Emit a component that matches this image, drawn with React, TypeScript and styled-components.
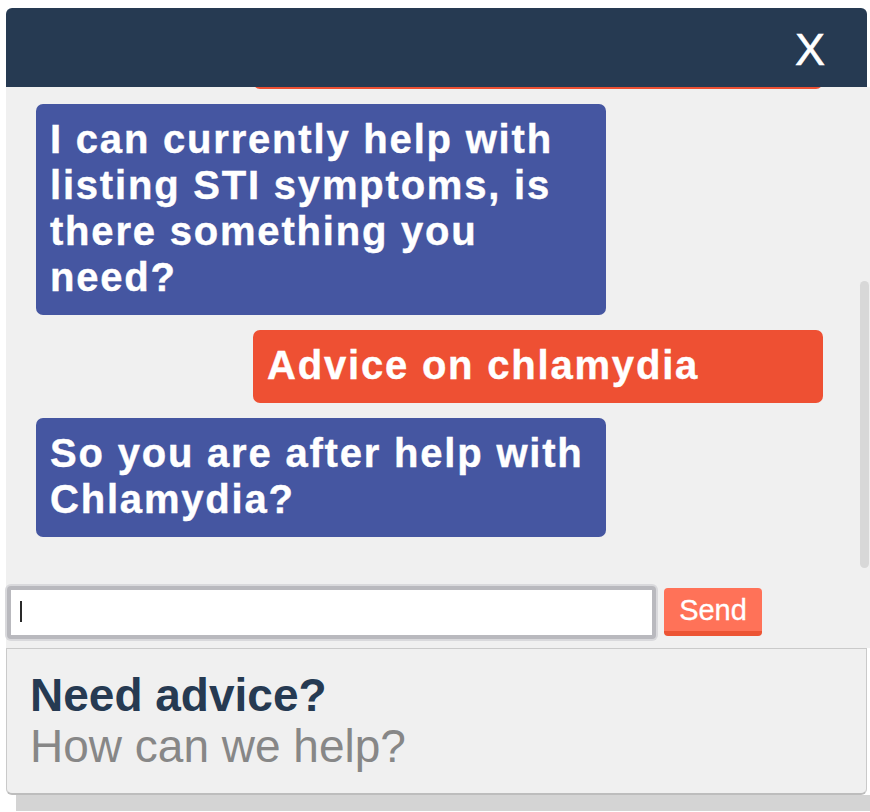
import React, { useLayoutEffect, useRef, useState } from "react";
import styled, { createGlobalStyle } from "styled-components";

const Global = createGlobalStyle`
  *, *::before, *::after { box-sizing: border-box; }
  html, body { margin: 0; padding: 0; background: #ffffff; }
  body { font-family: "Liberation Sans", Arial, Helvetica, sans-serif; }
`;

const Widget = styled.div`
  width: 864px;
  margin: 8px 0 0 6px;
  display: flex;
  flex-direction: column;
`;

const Header = styled.header`
  height: 79px;
  margin-right: 3px;
  background: #263a52;
  border-radius: 6px 6px 0 0;
  display: flex;
  align-items: center;
  justify-content: flex-end;
  padding-right: 42px;
`;

const CloseButton = styled.button`
  background: none;
  border: none;
  padding: 0;
  margin-top: 4px;
  color: #ffffff;
  font-family: "Liberation Sans", Arial, sans-serif;
  font-size: 45px;
  line-height: 1;
  -webkit-text-stroke: 0.6px #ffffff;
  cursor: pointer;
`;

const Body = styled.div`
  background: #f0f0f0;
  display: flex;
  flex-direction: column;
`;

const ScrollArea = styled.div`
  position: relative;
`;

const Messages = styled.div`
  height: 481px;
  overflow-y: auto;
  scrollbar-width: none;
  display: flex;
  flex-direction: column;
  gap: 15px;
  padding: 28px 47px 31px 30px;

  &::-webkit-scrollbar { display: none; }
`;

const Thumb = styled.div`
  position: absolute;
  right: 1px;
  width: 9px;
  background: #d8d8d8;
  border-radius: 5px;
`;

const Bubble = styled.div<{ $from: "bot" | "user" }>`
  flex: none;
  width: 570px;
  align-self: ${(p) => (p.$from === "bot" ? "flex-start" : "flex-end")};
  background: ${(p) => (p.$from === "bot" ? "#4556a1" : "#ee5033")};
  color: #ffffff;
  border-radius: 7px;
  padding: 12px 12px 15px 14px;
  font-family: "Liberation Sans", Arial, sans-serif;
  font-weight: 700;
  font-size: 40px;
  line-height: 46px;
  letter-spacing: 1.8px;
  -webkit-text-stroke: 0.4px #ffffff;
`;

const Composer = styled.div`
  display: flex;
  align-items: flex-start;
  gap: 8px;
  padding: 18px 0 9px 1px;
`;

const InputWrap = styled.div`
  position: relative;
  width: 649px;
  height: 53px;
`;

const TextInput = styled.input`
  width: 100%;
  height: 100%;
  border: 4px solid #b9b9be;
  border-radius: 4px;
  box-shadow: 0 0 0 2px #d9d9dc;
  background: #ffffff;
  outline: none;
  padding: 0 10px;
  font-family: "Liberation Sans", Arial, sans-serif;
  font-size: 22px;
`;

const Caret = styled.span`
  position: absolute;
  left: 13px;
  top: 15px;
  width: 2px;
  height: 21px;
  background: #2a2a2a;
`;

const SendButton = styled.button`
  margin-top: 2px;
  height: 48px;
  width: 98px;
  background: #ff7258;
  border: none;
  border-bottom: 5px solid #ec5434;
  border-radius: 4px;
  color: #ffffff;
  font-family: "Liberation Sans", Arial, sans-serif;
  font-size: 29px;
  line-height: 1;
  padding: 2px 0 0 0;
  -webkit-text-stroke: 0.3px #ffffff;
  cursor: pointer;
`;

const Footer = styled.footer`
  margin-right: 3px;
  background: #f0f0f0;
  border: 1px solid #cacaca;
  border-bottom: 2px solid #bdbdbd;
  border-radius: 0 0 6px 6px;
  padding: 21px 22px 21px 23px;
`;

const FooterTitle = styled.h2`
  margin: 0;
  font-family: "Liberation Sans", Arial, sans-serif;
  font-weight: 700;
  font-size: 46px;
  line-height: 51px;
  color: #263a52;
`;

const FooterSub = styled.p`
  margin: 0;
  font-family: "Liberation Sans", Arial, sans-serif;
  font-weight: 400;
  font-size: 46px;
  line-height: 51px;
  color: #878787;
`;

const Shadow = styled.div`
  height: 16px;
  margin-left: 10px;
  background: #d4d4d4;
`;

type Msg = { from: "bot" | "user"; text: string };

const messages: Msg[] = [
  {
    from: "bot",
    text: "Hi there! I'm the sexual health assistant. Ask me about STIs, symptoms or getting tested.",
  },
  { from: "user", text: "Hello" },
  {
    from: "bot",
    text: "I can currently help with listing STI symptoms, is there something you need?",
  },
  { from: "user", text: "Advice on chlamydia" },
  { from: "bot", text: "So you are after help with Chlamydia?" },
];

export default function App() {
  const listRef = useRef<HTMLDivElement>(null);
  const [thumb, setThumb] = useState({ top: 0, height: 0 });

  useLayoutEffect(() => {
    const el = listRef.current;
    if (!el) return;
    el.scrollTop = el.scrollHeight;
    const h = el.clientHeight;
    const total = el.scrollHeight;
    const height = Math.max(20, (h * h) / total);
    const top = (el.scrollTop / total) * h;
    setThumb({ top, height });
  }, []);

  return (
    <>
      <Global />
      <Widget>
        <Header>
          <CloseButton aria-label="Close chat">X</CloseButton>
        </Header>
        <Body>
          <ScrollArea>
            <Messages ref={listRef}>
              {messages.map((m, i) => (
                <Bubble key={i} $from={m.from}>
                  {m.text}
                </Bubble>
              ))}
            </Messages>
            <Thumb style={{ top: thumb.top, height: thumb.height }} />
          </ScrollArea>
          <Composer>
            <InputWrap>
              <TextInput type="text" aria-label="Message" />
              <Caret />
            </InputWrap>
            <SendButton>Send</SendButton>
          </Composer>
        </Body>
        <Footer>
          <FooterTitle>Need advice?</FooterTitle>
          <FooterSub>How can we help?</FooterSub>
        </Footer>
        <Shadow />
      </Widget>
    </>
  );
}
